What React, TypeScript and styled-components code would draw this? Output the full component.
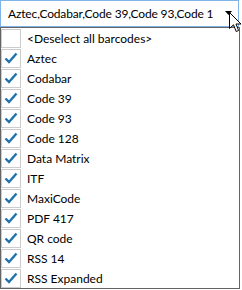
import styled, { createGlobalStyle } from "styled-components";

const Global = createGlobalStyle`
  html, body {
    margin: 0;
    background: #ffffff;
    font-family: Lato, "Noto Sans", sans-serif;
  }
`;

const Page = styled.div`
  position: relative;
  width: 242px;
  height: 290px;
  overflow: hidden;
`;

const Combo = styled.div`
  box-sizing: border-box;
  width: 239px;
  height: 27px;
  border: 1px solid #7eb4ea;
  display: flex;
  align-items: center;
  padding: 0 6px 0 7px;
`;

const ComboText = styled.div`
  flex: 1;
  overflow: hidden;
  white-space: nowrap;
  font-size: 12px;
  letter-spacing: -0.15px;
  color: #000;
  line-height: 25px;
`;

const Arrow = styled.svg`
  flex: none;
  margin-left: 2px;
  margin-bottom: 1px;
`;

const List = styled.div`
  box-sizing: border-box;
  width: 240px;
  border: 1px solid #646464;
  display: flex;
  flex-direction: column;
`;

const Row = styled.div`
  height: 20px;
  display: flex;
  align-items: center;
  gap: 6px;
  font-size: 12px;
  color: #000;
`;

const Box = styled.div`
  box-sizing: border-box;
  width: 20px;
  height: 19px;
  border: 1px solid #cccccc;
  display: flex;
  align-items: center;
  justify-content: center;
`;

const Cursor = styled.svg`
  position: absolute;
  left: 229px;
  top: 12px;
`;

const items = [
  "Aztec",
  "Codabar",
  "Code 39",
  "Code 93",
  "Code 128",
  "Data Matrix",
  "ITF",
  "MaxiCode",
  "PDF 417",
  "QR code",
  "RSS 14",
  "RSS Expanded",
];

const Check = () => (
  <svg width="14" height="12" viewBox="0 0 14 12">
    <path d="M1.5 6.5 L5 10 L12.5 1.5" fill="none" stroke="#1f74b0" strokeWidth="2.4" />
  </svg>
);

export default function App() {
  return (
    <Page>
      <Global />
      <Combo>
        <ComboText>Aztec,Codabar,Code 39,Code 93,Code 1</ComboText>
        <Arrow width="7" height="4" viewBox="0 0 7 4">
          <path d="M0 0 H7 L3.5 4 Z" fill="#000" />
        </Arrow>
      </Combo>
      <List>
        <Row>
          <Box />
          <span>&lt;Deselect all barcodes&gt;</span>
        </Row>
        {items.map((name) => (
          <Row key={name}>
            <Box>
              <Check />
            </Box>
            <span>{name}</span>
          </Row>
        ))}
      </List>
      <Cursor width="13" height="21" viewBox="0 0 13 21">
        <path
          d="M0.5 0.5 V16.5 L4.5 12.8 L7.2 19.5 L9.6 18.5 L7 12 H12 Z"
          fill="#fff"
          stroke="#000"
          strokeWidth="1"
        />
      </Cursor>
    </Page>
  );
}
